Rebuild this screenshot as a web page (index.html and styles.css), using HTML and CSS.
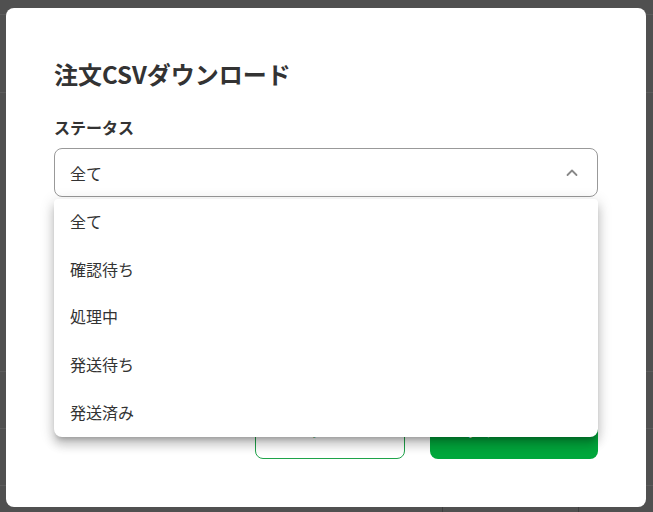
FILE: index.html
```html
<!DOCTYPE html>
<html lang="ja">
<head>
<meta charset="utf-8">
<link rel="stylesheet" href="styles.css">
</head>
<body>
<div class="modal">
  <h1 class="title">注文CSVダウンロード</h1>
  <div class="label">ステータス</div>
  <div class="select-wrap">
    <div class="select">
      <span>全て</span>
      <svg class="chev" width="14" height="14" viewBox="0 0 14 14"><path d="M2.5 9 L7 4.5 L11.5 9" fill="none" stroke="#888" stroke-width="1.8" stroke-linecap="round" stroke-linejoin="round"/></svg>
    </div>
    <ul class="menu">
      <li>全て</li>
      <li>確認待ち</li>
      <li>処理中</li>
      <li>発送待ち</li>
      <li>発送済み</li>
    </ul>
  </div>
  <div class="actions">
    <button class="btn outline">キャンセル</button>
    <button class="btn primary">ダウンロード</button>
  </div>
</div>
</body>
</html>
```
FILE: styles.css
```css
html, body { margin: 0; }
body {
  width: 653px;
  height: 512px;
  box-sizing: border-box;
  padding: 8px 7px 5px 6px;
  background-color: #505050;
  background-image:
    linear-gradient(#5c5c5c, #5c5c5c),
    linear-gradient(#5c5c5c, #5c5c5c),
    linear-gradient(#5c5c5c, #5c5c5c),
    linear-gradient(#5c5c5c, #5c5c5c),
    linear-gradient(#5c5c5c, #5c5c5c),
    linear-gradient(#3e3e3e, #3e3e3e),
    linear-gradient(#3e3e3e, #3e3e3e);
  background-size: 100% 1px, 100% 1px, 100% 1px, 100% 1px, 100% 1px, 1px 10px, 1px 10px;
  background-position: 0 14px, 0 92px, 0 371px, 0 428px, 0 485px, 442px 507px, 578px 507px;
  background-repeat: no-repeat;
  font-family: "Noto Sans CJK JP", "Noto Sans", sans-serif;
  color: #333;
  overflow: hidden;
}
.modal {
  width: 640px;
  height: 499px;
  box-sizing: border-box;
  background: #fff;
  border-radius: 8px;
  padding: 48px;
  display: flex;
  flex-direction: column;
}
.title {
  margin: 0;
  font-size: 24px;
  line-height: 36px;
  font-weight: 700;
  color: #333;
}
.label {
  margin-top: 23px;
  font-size: 16px;
  line-height: 24px;
  font-weight: 700;
}
.select-wrap {
  position: relative;
  margin-top: 9px;
}
.select {
  height: 49px;
  box-sizing: border-box;
  border: 1px solid #999;
  border-radius: 8px;
  padding: 0 18px 0 15px;
  display: flex;
  align-items: center;
  justify-content: space-between;
  font-size: 16px;
}
.chev { display: block; }
.menu {
  position: absolute;
  left: 0;
  right: 0;
  top: 51px;
  margin: 0;
  padding: 0;
  list-style: none;
  background: #fff;
  border-radius: 4px 4px 8px 8px;
  box-shadow: 0 5px 5px -3px rgba(0,0,0,.22), 0 8px 10px 1px rgba(0,0,0,.15), 0 3px 14px 2px rgba(0,0,0,.12);
  z-index: 2;
}
.menu li {
  height: 47.6px;
  box-sizing: border-box;
  padding-bottom: 3px;
  display: flex;
  align-items: center;
  padding-left: 16px;
  font-size: 16px;
  color: #333;
}
.actions {
  margin-top: auto;
  display: flex;
  justify-content: flex-end;
  gap: 25px;
}
.btn {
  height: 48px;
  border-radius: 8px;
  font-family: inherit;
  font-size: 16px;
  font-weight: 700;
  box-sizing: border-box;
  padding: 0 0 12px;
}
.outline {
  width: 150px;
  background: #fff;
  border: 1px solid #1fa34a;
  color: #1fa34a;
}
.primary {
  width: 168px;
  background: #00a73c;
  border: none;
  color: #fff;
}
```
